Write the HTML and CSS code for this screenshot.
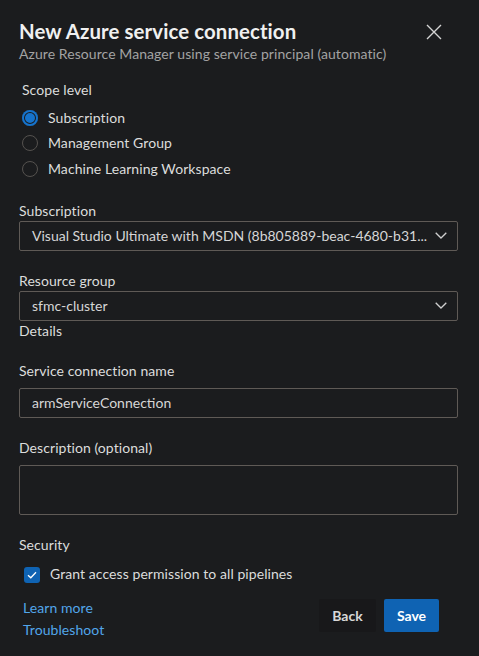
FILE: index.html
```html
<!DOCTYPE html>
<html lang="en">
<head>
<meta charset="utf-8">
<title>New Azure service connection</title>
<link rel="stylesheet" href="styles.css">
</head>
<body>
<div class="dialog">
  <header class="head">
    <div class="head-text">
      <h1 class="title">New Azure service connection</h1>
      <p class="subtitle">Azure Resource Manager using service principal (automatic)</p>
    </div>
    <button class="close" aria-label="Close">
      <svg width="16" height="16" viewBox="0 0 16 16"><path d="M1 1 L15 15 M15 1 L1 15" stroke="#d4d4d4" stroke-width="1.4" fill="none"/></svg>
    </button>
  </header>

  <section class="scope">
    <div class="label">Scope level</div>
    <div class="radios">
      <div class="radio-row"><span class="radio checked"></span><span>Subscription</span></div>
      <div class="radio-row"><span class="radio"></span><span>Management Group</span></div>
      <div class="radio-row"><span class="radio"></span><span>Machine Learning Workspace</span></div>
    </div>
  </section>

  <div class="field first">
    <div class="label">Subscription</div>
    <div class="box select"><span class="value">Visual Studio Ultimate with MSDN (8b805889-beac-4680-b31...</span>
      <svg class="chev" width="12" height="7" viewBox="0 0 12 7"><path d="M0.7 0.7 L6 6 L11.3 0.7" stroke="#cfcfcf" stroke-width="1.3" fill="none"/></svg>
    </div>
  </div>

  <div class="field">
    <div class="label">Resource group</div>
    <div class="box select"><span class="value">sfmc-cluster</span>
      <svg class="chev" width="12" height="7" viewBox="0 0 12 7"><path d="M0.7 0.7 L6 6 L11.3 0.7" stroke="#cfcfcf" stroke-width="1.3" fill="none"/></svg>
    </div>
  </div>

  <div class="label">Details</div>

  <div class="field">
    <div class="label gap">Service connection name</div>
    <div class="box"><span class="value">armServiceConnection</span></div>
  </div>

  <div class="field">
    <div class="label gap">Description (optional)</div>
    <div class="box area"></div>
  </div>

  <div class="field">
    <div class="label">Security</div>
    <div class="check-row">
      <span class="checkbox"><svg width="10" height="8" viewBox="0 0 10 8"><path d="M1 4.2 L3.8 6.8 L9 1.2" stroke="#ffffff" stroke-width="1.3" fill="none"/></svg></span>
      <span>Grant access permission to all pipelines</span>
    </div>
  </div>

  <footer class="foot">
    <div class="links">
      <a class="link" href="#">Learn more</a>
      <a class="link" href="#">Troubleshoot</a>
    </div>
    <div class="buttons">
      <button class="btn back">Back</button>
      <button class="btn save">Save</button>
    </div>
  </footer>
</div>
</body>
</html>
```

FILE: styles.css
```css
* { box-sizing: border-box; }
html, body {
  margin: 0;
  padding: 0;
  background: #1b1c1e;
}
body {
  font-family: "Segoe UI", Lato, "Open Sans", sans-serif;
  font-size: 14px;
  line-height: 20px;
  letter-spacing: 0.07px;
  color: #dcdcdc;
}
.dialog {
  width: 479px;
  height: 656px;
  padding: 18px 21px 0 19px;
  display: flex;
  flex-direction: column;
}
.head {
  display: flex;
  justify-content: space-between;
  align-items: flex-start;
}
.title {
  margin: 0;
  font-size: 20.4px;
  line-height: 26px;
  font-weight: 700;
  letter-spacing: 0.1px;
  color: #f0f0f0;
}
.subtitle {
  margin: 0;
  font-size: 14px;
  line-height: 20px;
  color: #a3a3a3;
}
.close {
  background: none;
  border: 0;
  padding: 0;
  width: 32px;
  height: 32px;
  display: flex;
  align-items: center;
  justify-content: center;
  margin: -2px 8px 0 0;
  cursor: pointer;
}
.scope {
  margin-top: 16px;
  padding-left: 3px;
}
.label {
  color: #dcdcdc;
}
.label.gap {
  margin-bottom: 7px;
}
.radios {
  margin-top: 5px;
  display: flex;
  flex-direction: column;
}
.radio-row {
  height: 25.5px;
  display: flex;
  align-items: center;
  gap: 10px;
}
.radio {
  width: 16px;
  height: 16px;
  border-radius: 50%;
  border: 1px solid #55524f;
  flex: none;
}
.radio.checked {
  border: none;
  background: #1673cc;
  box-shadow: inset 0 0 0 2px #1673cc, inset 0 0 0 3px #1b1c1e;
}
.field {
  margin-top: 20px;
}
.field.first {
  margin-top: 19px;
}
.box {
  height: 30px;
  border: 1px solid #5f5a56;
  border-radius: 2px;
  display: flex;
  align-items: center;
  padding: 0 10px 0 12px;
  color: #d6d6d6;
  letter-spacing: 0;
}
.box.area {
  height: 50px;
}
.select .value {
  flex: 1;
  min-width: 0;
  white-space: nowrap;
}
.chev {
  flex: none;
  margin-left: 6px;
}
.check-row {
  margin-top: 9px;
  padding-left: 5px;
  display: flex;
  align-items: center;
  gap: 10px;
}
.checkbox {
  width: 16px;
  height: 16px;
  border-radius: 3px;
  background: #0f63b3;
  display: flex;
  align-items: center;
  justify-content: center;
  margin-top: 3px;
  flex: none;
}
.foot {
  margin-top: 13px;
  display: flex;
  justify-content: space-between;
  align-items: flex-start;
  padding-right: 19px;
}
.links {
  display: flex;
  flex-direction: column;
  padding-left: 4px;
}
.link {
  color: #52a6ea;
  text-decoration: none;
  line-height: 22px;
}
.buttons {
  display: flex;
  gap: 8px;
  margin-top: 2px;
}
.btn {
  font-family: inherit;
  font-size: 14px;
  font-weight: 700;
  height: 33px;
  border: 0;
  border-radius: 2px;
  padding: 0 12px;
  cursor: pointer;
}
.back {
  width: 57px;
  background: #18181a;
  color: #d8d8d8;
}
.save {
  width: 55px;
  background: #0f63b3;
  color: #ffffff;
}
```
